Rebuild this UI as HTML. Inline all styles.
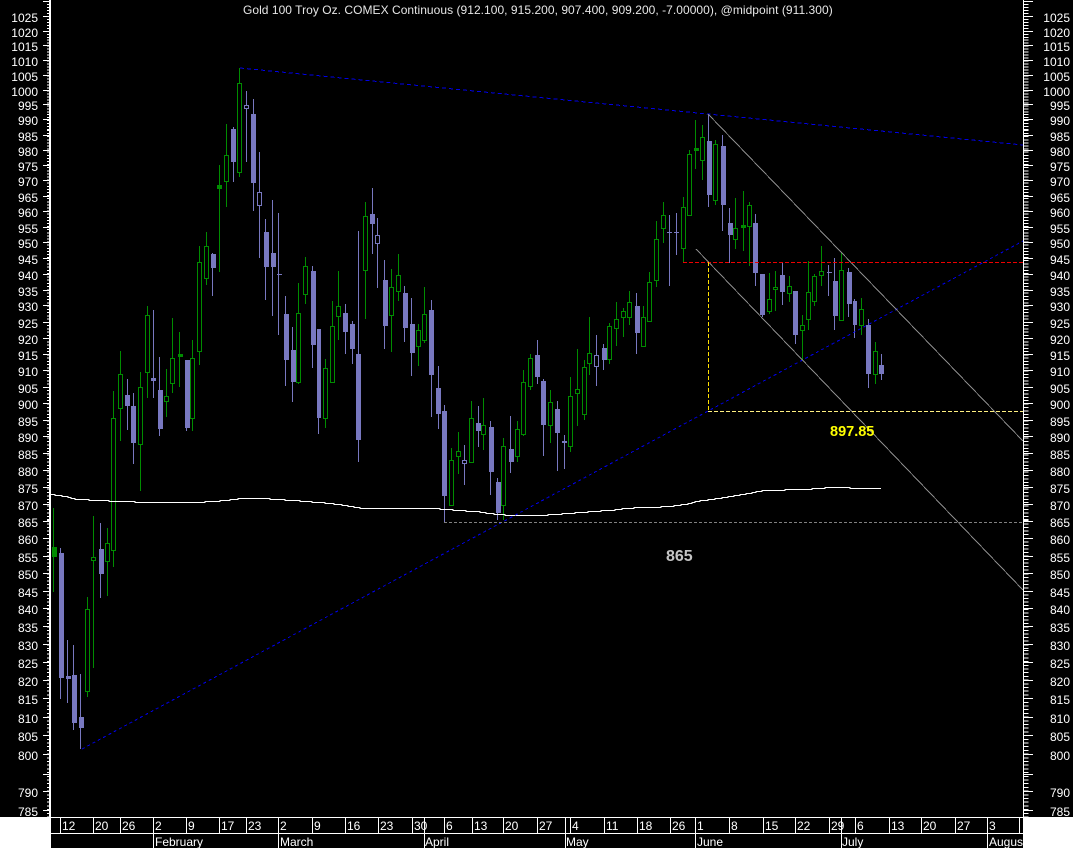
<!DOCTYPE html>
<html><head><meta charset="utf-8"><title>Gold chart</title>
<style>
html,body{margin:0;padding:0;background:#000;width:1073px;height:848px;overflow:hidden}
svg{display:block}
text{font-family:"Liberation Sans",Arial,sans-serif;font-size:12px;fill:#fff}
</style></head><body>
<svg width="1073" height="848" viewBox="0 0 1073 848" xmlns="http://www.w3.org/2000/svg">
<rect width="1073" height="848" fill="#000"/>
<g shape-rendering="crispEdges" fill="none">
<!-- purple wicks -->
<path stroke="#7878c0" d="M60.5 548V699M67.5 640V703M73.5 645V730M80.5 674V749M100.5 523V598M127.5 379V430M133.5 393V464M153.5 310V398M159.5 357V436M186.5 360V431M212.5 253V296M233.5 127V182M246.5 91V162M253.5 99V211M259.5 152V258M265.5 219V300M272.5 200V316M278.5 213V335M285.5 296V386M292.5 327V402M312.5 266V368M318.5 329V434M345.5 304V354M352.5 321V364M358.5 231V462M372.5 188V254M377.5 218V288M384.5 260V349M404.5 286V342M411.5 298V376M431.5 300V417M438.5 366V429M444.5 405V522M464.5 445V485M478.5 406V447M490.5 421V495M497.5 478V520M510.5 416V473M537.5 340V384M543.5 379V456M557.5 401V471M564.5 435V469M596.5 335V386M603.5 344V370M636.5 293V354M669.5 215V286M676.5 213V255M708.5 114V207M722.5 135V231M729.5 208V263M755.5 214V286M762.5 274V317M782.5 262V305M795.5 291V344M828.5 265V296M834.5 258V330M848.5 268V317M854.5 299V338M868.5 319V388M881.5 354V380"/>
<!-- purple bodies -->
<path fill="#7878c0" d="M59 553V678h5V553zM66 676V679h5V676zM72 675V723h5V675zM79 717V728h5V717zM99 549V574h5V549zM125 395V406h5V395zM131 406V443h5V406zM151 378V381h5V378zM158 390V429h5V390zM185 360V428h5V360zM211 254V268h5V254zM231 129V162h5V129zM251 114V183h5V114zM264 232V267h5V232zM271 253V267h5V253zM277 274V275h5V274zM284 314V360h5V314zM291 350V382h5V350zM311 271V345h5V271zM317 329V418h4V329zM343 313V332h5V313zM350 324V349h5V324zM356 354V440h5V354zM370 214V224h5V214zM383 280V326h5V280zM403 293V328h5V293zM410 324V353h5V324zM429 310V375h5V310zM436 388V414h5V388zM442 411V496h5V411zM476 423V431h5V423zM489 427V472h5V427zM496 482V513h5V482zM509 449V462h5V449zM535 355V377h5V355zM541 381V425h5V381zM555 409V433h5V409zM562 441V443h5V441zM602 348V360h5V348zM635 306V333h5V306zM667 232V233h5V232zM674 232V233h5V232zM707 141V195h5V141zM721 146V205h5V146zM728 223V235h5V223zM753 223V273h5V223zM760 274V315h5V274zM780 275V292h5V275zM793 291V335h5V291zM827 272V273h5V272zM833 281V316h5V281zM847 272V304h5V272zM853 301V325h4V301zM866 325V374h5V325zM879 365V374h5V365z"/>
<!-- purple hollow -->
<path fill="#000" stroke="#7878c0" d="M244.5 105.5V108.500h4V105.500zM257.500 192.500V205.500h4V192.500zM375.500 235.500V243.500h4V235.500zM462.500 460.500V463.500h4V460.500zM594.500 355.500V366.500h4V355.500z"/>
<!-- green wicks -->
<path stroke="#008c00" d="M53.500 508V592M87.500 597V697M93.500 516V668M107.500 528V596M113.500 391V567M120.500 351V441M140.500 372V491M147.500 306V398M166.500 369V417M172.500 318V393M179.500 332V387M192.500 340V431M199.500 246V365M206.500 232V285M219.500 165V272M226.500 124V207M239.500 68V177M298.500 283V384M305.500 257V304M325.500 359V428M332.500 301V383M338.500 271V340M365.500 202V319M391.500 269V352M398.500 254V301M418.500 324V366M424.500 287V343M451.500 448V505M458.500 432V474M471.500 401V462M483.500 398V450M503.500 438V520M517.500 421V462M523.500 370V436M530.500 354V390M550.500 390V443M570.500 377V452M577.500 349V426M584.500 360V420M589.500 317V375M609.500 323V364M616.500 302V346M623.500 308V337M629.500 291V325M643.500 306V346M649.500 272V321M656.500 221V287M663.500 202V243M683.500 197V262M689.500 150V215M695.500 120V169M702.500 125V180M715.500 140V205M735.500 198V249M743.500 191V251M749.500 202V266M769.500 273V314M775.500 271V311M789.500 276V302M802.500 315V360M808.500 261V330M814.500 274V306M821.500 246V286M841.500 253V320M861.500 298V335M875.500 342V384"/>
<!-- green filled -->
<path fill="#008c00" d="M52 547V557h5V547zM178 354V357h5V354zM217 185V189h5V185zM694 148V151h5V148zM741 225V228h5V225z"/>
<!-- green hollow -->
<path fill="#000" stroke="#008c00" d="M85.500 609.500V691.500h4V609.500zM91.500 557.500V560.500h4V557.500zM105.500 543.500V561.500h4V543.500zM111.500 418.500V550.500h4V418.500zM118.500 374.500V408.500h4V374.500zM138.500 387.500V444.500h4V387.500zM145.500 315.500V372.500h4V315.500zM164.500 396.500V401.500h4V396.500zM170.500 358.500V383.500h4V358.500zM190.500 358.500V418.500h4V358.500zM197.500 262.500V351.500h4V262.500zM204.500 246.500V278.500h4V246.500zM224.500 155.500V181.500h4V155.500zM237.500 83.500V172.500h4V83.500zM296.500 313.500V382.500h4V313.500zM303.500 266.500V294.500h4V266.500zM323.500 368.500V418.500h4V368.500zM330.500 326.500V382.500h4V326.500zM336.500 306.500V316.500h4V306.500zM363.500 216.500V270.500h4V216.500zM389.500 287.500V315.500h4V287.500zM396.500 275.500V291.500h4V275.500zM416.500 330.500V346.500h4V330.500zM422.500 314.500V340.500h4V314.500zM449.500 460.500V505.500h4V460.500zM456.500 451.500V456.500h4V451.500zM469.500 418.500V462.500h4V418.500zM481.500 425.500V434.500h4V425.500zM501.500 446.500V505.500h4V446.500zM515.500 429.500V456.500h4V429.500zM521.500 382.500V434.500h4V382.500zM528.500 358.500V386.500h4V358.500zM548.500 402.500V425.500h4V402.500zM568.500 396.500V446.500h4V396.500zM575.500 389.500V393.500h4V389.500zM582.500 367.500V414.500h4V367.500zM587.500 353.500V363.500h4V353.500zM607.500 326.500V359.500h4V326.500zM614.500 319.500V328.500h4V319.500zM621.500 311.500V317.500h4V311.500zM627.500 302.500V317.500h4V302.500zM641.500 317.500V346.500h4V317.500zM647.500 282.500V321.500h4V282.500zM654.500 239.500V280.500h4V239.500zM661.500 215.500V228.500h4V215.500zM681.500 207.500V248.500h4V207.500zM687.500 154.500V215.500h4V154.500zM700.500 137.500V160.500h4V137.500zM713.500 144.500V200.500h4V144.500zM733.500 228.500V239.500h4V228.500zM747.500 205.500V226.500h4V205.500zM767.500 299.500V311.500h4V299.500zM773.500 287.500V289.500h4V287.500zM787.500 286.500V293.500h4V286.500zM800.500 325.500V330.500h4V325.500zM806.500 292.500V319.500h4V292.500zM812.500 276.500V301.500h4V276.500zM819.500 271.500V275.500h4V271.500zM839.500 270.500V320.500h4V270.500zM859.500 309.500V325.500h4V309.500zM873.500 351.500V374.500h4V351.500z"/>
<!-- moving average -->
<path stroke="#fff" d="M50 494.500H55V495.500H62V496.500H68V497.500H71V498.500H75V499.500H89V500.500H109V501.500H135V502.500H205V501.500H220V500.500H230V499.500H238V498.500H270V499.500H285V500.500H300V501.500H312V502.500H325V503.500H334V504.500H342V505.500H348V506.500H354V507.500H360V508.500H440V509.500H453V510.500H466V511.500H480V512.500H486V513.500H494V514.500H505V515.500H548V514.500H562V513.500H575V512.500H588V511.500H601V510.500H615V509.500H622V508.500H634V507.500H661V506.500H674V505.500H681V504.500H688V503.500H692V502.500H695V501.500H700V500.500H708V499.500H715V498.500H722V497.500H728V496.500H734V495.500H740V494.500H746V493.500H752V492.500H756V491.500H762V490.500H785V489.500H812V488.500H825V487.500H850V488.500H881"/>
<!-- trend lines -->
<path stroke="#0000e6" stroke-dasharray="4 3" d="M240 68L1023 145"/>
<path stroke="#0000e6" stroke-dasharray="3 3" d="M82 749L1023 241"/>
<path stroke="#8a8a8a" d="M708 114L1023 441M696 249L1023 590"/>
<path stroke="#ee0000" stroke-dasharray="4 2" d="M683 262.500H1023"/>
<path stroke="#ffe000" stroke-dasharray="4 2" d="M708.500 262V411"/>
<path stroke="#fff080" stroke-dasharray="4 2" d="M708 411.500H1023"/>
<path stroke="#808080" stroke-dasharray="3 2" d="M444 522.500H1023"/>
<!-- axes -->
<path stroke="#fff" stroke-width="2" d="M50 0V817"/>
<path stroke="#fff" d="M1023.500 0V817"/>
<g stroke="#fff">
<path d="M49 1.500h-6M49 16.500h-6M49 31.500h-6M49 45.500h-6M49 60.500h-6M49 75.500h-6M49 90.500h-6M49 104.500h-6M49 119.500h-6M49 135.500h-6M49 150.500h-6M49 165.500h-6M49 180.500h-6M49 196.500h-6M49 211.500h-6M49 227.500h-6M49 242.500h-6M49 258.500h-6M49 274.500h-6M49 290.500h-6M49 305.500h-6M49 322.500h-6M49 338.500h-6M49 354.500h-6M49 370.500h-6M49 387.500h-6M49 403.500h-6M49 420.500h-6M49 436.500h-6M49 453.500h-6M49 470.500h-6M49 487.500h-6M49 504.500h-6M49 521.500h-6M49 538.500h-6M49 556.500h-6M49 573.500h-6M49 591.500h-6M49 608.500h-6M49 626.500h-6M49 644.500h-6M49 662.500h-6M49 680.500h-6M49 698.500h-6M49 717.500h-6M49 735.500h-6M49 754.500h-6M49 774.500h-6M49 791.500h-6M49 810.500h-6"/>
<path stroke-width="2" stroke-dasharray="1 1.980" d="M48 1V130"/>
<path stroke-width="2" stroke-dasharray="1 2.100" d="M48 130V260"/>
<path stroke-width="2" stroke-dasharray="1 2.250" d="M48 260V390"/>
<path stroke-width="2" stroke-dasharray="1 2.400" d="M48 390V520"/>
<path stroke-width="2" stroke-dasharray="1 2.550" d="M48 520V650"/>
<path stroke-width="2" stroke-dasharray="1 2.700" d="M48 650V817"/>
</g>
<g stroke="#fff">
<path d="M1024 1.500h9M1024 16.500h9M1024 31.500h9M1024 45.500h9M1024 60.500h9M1024 75.500h9M1024 90.500h9M1024 104.500h9M1024 119.500h9M1024 135.500h9M1024 150.500h9M1024 165.500h9M1024 180.500h9M1024 196.500h9M1024 211.500h9M1024 227.500h9M1024 242.500h9M1024 258.500h9M1024 274.500h9M1024 290.500h9M1024 305.500h9M1024 322.500h9M1024 338.500h9M1024 354.500h9M1024 370.500h9M1024 387.500h9M1024 403.500h9M1024 420.500h9M1024 436.500h9M1024 453.500h9M1024 470.500h9M1024 487.500h9M1024 504.500h9M1024 521.500h9M1024 538.500h9M1024 556.500h9M1024 573.500h9M1024 591.500h9M1024 608.500h9M1024 626.500h9M1024 644.500h9M1024 662.500h9M1024 680.500h9M1024 698.500h9M1024 717.500h9M1024 735.500h9M1024 754.500h9M1024 774.500h9M1024 791.500h9M1024 810.500h9"/>
<path stroke-width="5" stroke-dasharray="1 1.980" d="M1026 1V130"/>
<path stroke-width="5" stroke-dasharray="1 2.100" d="M1026 130V260"/>
<path stroke-width="5" stroke-dasharray="1 2.250" d="M1026 260V390"/>
<path stroke-width="5" stroke-dasharray="1 2.400" d="M1026 390V520"/>
<path stroke-width="5" stroke-dasharray="1 2.550" d="M1026 520V650"/>
<path stroke-width="5" stroke-dasharray="1 2.700" d="M1026 650V817"/>
</g>
<!-- bottom axis lines -->
<path stroke="#fff" d="M51 817.500H1023M51 833.500H1023"/>
<path stroke="#fff" d="M60.500 818V833M93.500 818V833M120.500 818V833M186.500 818V833M219.500 818V833M246.500 818V833M312.500 818V833M345.500 818V833M378.500 818V833M412.500 818V833M444.500 818V833M472.500 818V833M503.500 818V833M537.500 818V833M570.500 818V833M604.500 818V833M637.500 818V833M670.500 818V833M729.500 818V833M763.500 818V833M795.500 818V833M829.500 818V833M855.500 818V833M889.500 818V833M921.500 818V833M955.500 818V833M1019.500 818V833M153.500 818V848M278.500 818V848M424.500 818V848M565.500 818V848M695.500 818V848M841.500 818V848M987.500 818V848"/>
</g>
<!-- title and annotations -->
<text x="243" y="14" style="fill:#e6e6e6;letter-spacing:.04px">Gold 100 Troy Oz. COMEX Continuous (912.100, 915.200, 907.400, 909.200, -7.00000), @midpoint (911.300)</text>
<text x="830" y="436" style="fill:#ffff00;font-weight:bold;font-size:14.500px">897.85</text>
<text x="666" y="561" style="fill:#c4c4c4;font-weight:bold;font-size:16px">865</text>
<!-- left labels -->
<g text-anchor="end">
<text x="38" y="22">1025</text><text x="38" y="37">1020</text><text x="38" y="51">1015</text><text x="38" y="66">1010</text><text x="38" y="81">1005</text><text x="38" y="96">1000</text><text x="38" y="110">995</text><text x="38" y="125">990</text><text x="38" y="141">985</text><text x="38" y="156">980</text><text x="38" y="171">975</text><text x="38" y="186">970</text><text x="38" y="202">965</text><text x="38" y="217">960</text><text x="38" y="233">955</text><text x="38" y="248">950</text><text x="38" y="264">945</text><text x="38" y="280">940</text><text x="38" y="296">935</text><text x="38" y="311">930</text><text x="38" y="328">925</text><text x="38" y="344">920</text><text x="38" y="360">915</text><text x="38" y="376">910</text><text x="38" y="393">905</text><text x="38" y="409">900</text><text x="38" y="426">895</text><text x="38" y="442">890</text><text x="38" y="459">885</text><text x="38" y="476">880</text><text x="38" y="493">875</text><text x="38" y="510">870</text><text x="38" y="527">865</text><text x="38" y="544">860</text><text x="38" y="562">855</text><text x="38" y="579">850</text><text x="38" y="597">845</text><text x="38" y="614">840</text><text x="38" y="632">835</text><text x="38" y="650">830</text><text x="38" y="668">825</text><text x="38" y="686">820</text><text x="38" y="704">815</text><text x="38" y="723">810</text><text x="38" y="741">805</text><text x="38" y="760">800</text><text x="38" y="797">790</text><text x="38" y="816">785</text>
</g>
<!-- right labels -->
<g text-anchor="end">
<text x="1070" y="22">1025</text><text x="1070" y="37">1020</text><text x="1070" y="51">1015</text><text x="1070" y="66">1010</text><text x="1070" y="81">1005</text><text x="1070" y="96">1000</text><text x="1070" y="110">995</text><text x="1070" y="125">990</text><text x="1070" y="141">985</text><text x="1070" y="156">980</text><text x="1070" y="171">975</text><text x="1070" y="186">970</text><text x="1070" y="202">965</text><text x="1070" y="217">960</text><text x="1070" y="233">955</text><text x="1070" y="248">950</text><text x="1070" y="264">945</text><text x="1070" y="280">940</text><text x="1070" y="296">935</text><text x="1070" y="311">930</text><text x="1070" y="328">925</text><text x="1070" y="344">920</text><text x="1070" y="360">915</text><text x="1070" y="376">910</text><text x="1070" y="393">905</text><text x="1070" y="409">900</text><text x="1070" y="426">895</text><text x="1070" y="442">890</text><text x="1070" y="459">885</text><text x="1070" y="476">880</text><text x="1070" y="493">875</text><text x="1070" y="510">870</text><text x="1070" y="527">865</text><text x="1070" y="544">860</text><text x="1070" y="562">855</text><text x="1070" y="579">850</text><text x="1070" y="597">845</text><text x="1070" y="614">840</text><text x="1070" y="632">835</text><text x="1070" y="650">830</text><text x="1070" y="668">825</text><text x="1070" y="686">820</text><text x="1070" y="704">815</text><text x="1070" y="723">810</text><text x="1070" y="741">805</text><text x="1070" y="760">800</text><text x="1070" y="797">790</text><text x="1070" y="816">785</text>
</g>
<!-- date row -->
<text x="62" y="830">12</text><text x="95" y="830">20</text><text x="122" y="830">26</text><text x="155" y="830">2</text><text x="188" y="830">9</text><text x="221" y="830">17</text><text x="248" y="830">23</text><text x="280" y="830">2</text><text x="314" y="830">9</text><text x="347" y="830">16</text><text x="380" y="830">23</text><text x="414" y="830">30</text><text x="446" y="830">6</text><text x="474" y="830">13</text><text x="505" y="830">20</text><text x="539" y="830">27</text><text x="572" y="830">4</text><text x="606" y="830">11</text><text x="639" y="830">18</text><text x="672" y="830">26</text><text x="697" y="830">1</text><text x="731" y="830">8</text><text x="765" y="830">15</text><text x="797" y="830">22</text><text x="831" y="830">29</text><text x="857" y="830">6</text><text x="891" y="830">13</text><text x="923" y="830">20</text><text x="957" y="830">27</text><text x="989" y="830">3</text>
<text x="155" y="846">February</text><text x="280" y="846">March</text><text x="425" y="846">April</text><text x="566" y="846">May</text><text x="697" y="846">June</text><text x="842" y="846">July</text><text x="989" y="846">August</text>
<g shape-rendering="crispEdges">
<rect x="0" y="817" width="51" height="31" fill="#fff"/>
<rect x="1023" y="817" width="50" height="31" fill="#fff"/>
</g>
</svg>
</body></html>
